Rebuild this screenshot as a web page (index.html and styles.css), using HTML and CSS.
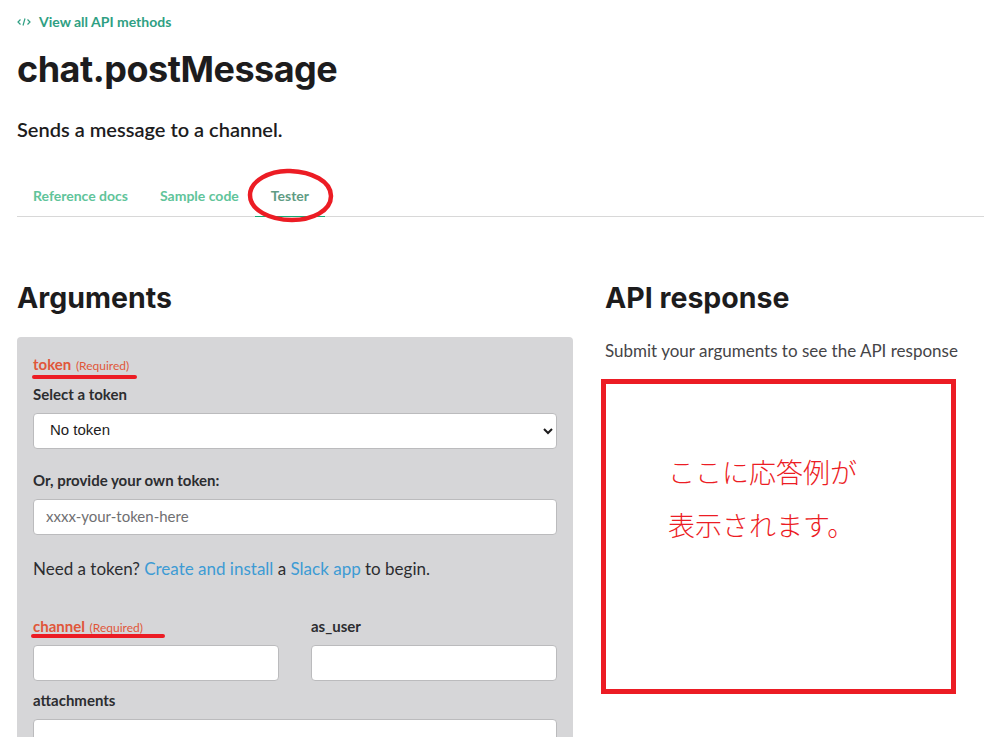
FILE: index.html
```html
<!DOCTYPE html>
<html lang="ja">
<head>
  <meta charset="UTF-8" />
  <title>chat.postMessage</title>
  <link rel="stylesheet" href="styles.css">
</head>
<body>
  <div class="page">
    <a class="back-link" href="#">
      <svg class="back-icon" width="14" height="10" viewBox="0 0 14 10" fill="none" stroke="#2f9f83" stroke-width="1.2">
        <path d="M3.500 2.500 1 5l2.500 2.500M10.500 2.500 13 5l-2.500 2.500M8 1.500 6 8.500" />
      </svg>
      View all API methods
    </a>
    <h1>chat.postMessage</h1>
    <p class="summary">Sends a message to a channel.</p>

    <nav class="tabs">
      <a class="tab" href="#">Reference docs</a>
      <a class="tab" href="#">Sample code</a>
      <a class="tab active" href="#">Tester</a>
    </nav>

    <div class="columns">
      <section class="args">
        <h2>Arguments</h2>
        <form class="panel">
          <div class="field">
            <div class="req-label">token <small>(Required)</small></div>
            <label for="tokenSelect">Select a token</label>
            <select id="tokenSelect"><option>No token</option></select>
          </div>
          <div class="field">
            <label for="ownToken">Or, provide your own token:</label>
            <input type="text" id="ownToken" placeholder="xxxx-your-token-here" />
          </div>
          <p class="hint">Need a token? <a href="#">Create and install</a> a <a href="#">Slack app</a> to begin.</p>
          <div class="two-col">
            <div>
              <div class="req-label">channel <small>(Required)</small></div>
              <input type="text" />
            </div>
            <div>
              <label class="plain" for="asUser">as_user</label>
              <input type="text" id="asUser" />
            </div>
          </div>
          <div class="field">
            <label for="attachments">attachments</label>
            <input type="text" id="attachments" />
          </div>
        </form>
      </section>

      <section class="response">
        <h2>API response</h2>
        <p class="response-note">Submit your arguments to see the API response</p>
      </section>
    </div>
  </div>

  <!-- red marks drawn over the page -->
  <svg class="tab-circle" width="90" height="56" viewBox="0 0 90 56" fill="none">
    <path d="M44 3C24 2 4 13 4 27c0 15 20 25 42 25 20 0 39-9 39-24C85 13 66 4 44 3Z" stroke="#ec1c24" stroke-width="4.500" />
  </svg>
  <div class="mark mark-token"></div>
  <div class="mark mark-channel"></div>
  <div class="note-box">
    <p>ここに応答例が</p>
    <p>表示されます。</p>
  </div>
</body>
</html>
```

FILE: styles.css
```css
html, body {
  height: 737px;
  overflow: hidden;
}
body {
  margin: 0;
  background: white;
  font-family: Lato, "Noto Sans CJK JP", sans-serif;
  color: #1d1c1d;
  position: relative;
}
.page {
  padding: 13px 0 0 17px;
}
a {
  text-decoration: none;
}
.back-link {
  display: flex;
  align-items: center;
  gap: 8px;
  height: 17px;
  color: #2f9f83;
  font-size: 14px;
  font-weight: 700;
}
h1 {
  margin: 16px 0 0;
  font-family: Inter, sans-serif;
  font-size: 36px;
  line-height: 46px;
  font-weight: 700;
  letter-spacing: -0.5px;
}
.summary {
  margin: 25px 0 0;
  font-size: 20px;
  line-height: 24px;
  font-weight: 600;
  color: #1d1c1d;
}
.tabs {
  display: flex;
  margin-top: 24px;
  height: 51px;
  border-bottom: 1px solid #d8d8d8;
}
.tab {
  height: 52px;
  box-sizing: border-box;
  padding: 22px 16px 0;
  color: #5fc49a;
  font-size: 14px;
  font-weight: 700;
}
.tab.active {
  color: #5f9c84;
  border-bottom: 1px solid #17a974;
}
.columns {
  display: flex;
  gap: 32px;
  margin-top: 59px;
}
.args {
  width: 556px;
  flex: none;
}
h2 {
  margin: 0;
  font-family: Inter, sans-serif;
  font-size: 28.500px;
  line-height: 44px;
  font-weight: 700;
}
.panel {
  margin-top: 17px;
  padding: 18px 16px 16px;
  background: #d6d6d8;
  border-radius: 4px;
  height: 420px;
  box-sizing: border-box;
}
.req-label {
  color: #e0563a;
  font-size: 15px;
  font-weight: 700;
  line-height: 18px;
}
.req-label small {
  font-size: 12px;
  font-weight: 400;
  margin-left: 1px;
}
label {
  display: block;
  font-size: 15px;
  font-weight: 700;
  line-height: 18px;
  color: #2c2d30;
}
.field label {
  margin-bottom: 10px;
}
.field .req-label {
  margin-bottom: 10px;
}
.field {
  margin-bottom: 22px;
}
select, input[type="text"] {
  display: block;
  width: 100%;
  height: 36px;
  box-sizing: border-box;
  border: 1px solid #bbbbbd;
  border-radius: 4px;
  background: white;
}
select {
  padding: 0 0 3px 12px;
  color: #1d1c1d;
  font-family: "Liberation Sans", sans-serif;
  font-size: 15px;
}
input[type="text"] {
  padding: 0 12px 2px;
  font-family: Lato, sans-serif;
  font-size: 15px;
}
input::placeholder {
  color: #6f6f72;
  opacity: 1;
}
.hint {
  margin: 0 0 36px;
  font-size: 17px;
  line-height: 24px;
  color: #2c2d30;
}
.hint a {
  color: #3d9bd4;
}
.two-col {
  display: grid;
  grid-template-columns: 246px 246px;
  gap: 32px;
  margin-bottom: 10px;
}
.two-col .req-label {
  margin-bottom: 8px;
}
.plain {
  margin-bottom: 10px;
}
.response {
  flex: 1;
}
.response-note {
  margin: 19px 0 0;
  font-size: 17px;
  line-height: 24px;
  color: #454447;
}
.tab-circle {
  position: absolute;
  left: 246px;
  top: 168px;
}
.mark {
  position: absolute;
  height: 4px;
  border-radius: 2px;
  background: #ec1c24;
}
.mark-token {
  left: 32px;
  top: 375px;
  width: 105px;
}
.mark-channel {
  left: 31px;
  top: 634px;
  width: 134px;
}
.note-box {
  position: absolute;
  left: 601px;
  top: 379px;
  width: 355px;
  height: 315px;
  box-sizing: border-box;
  border: 5px solid #ec1c24;
  background: white;
  padding-top: 61px;
  padding-left: 62px;
  color: #ec1c24;
  font-family: "Noto Sans CJK JP", sans-serif;
  font-weight: 300;
  font-size: 27px;
  line-height: 53px;
}
.note-box p {
  margin: 0;
}
```
